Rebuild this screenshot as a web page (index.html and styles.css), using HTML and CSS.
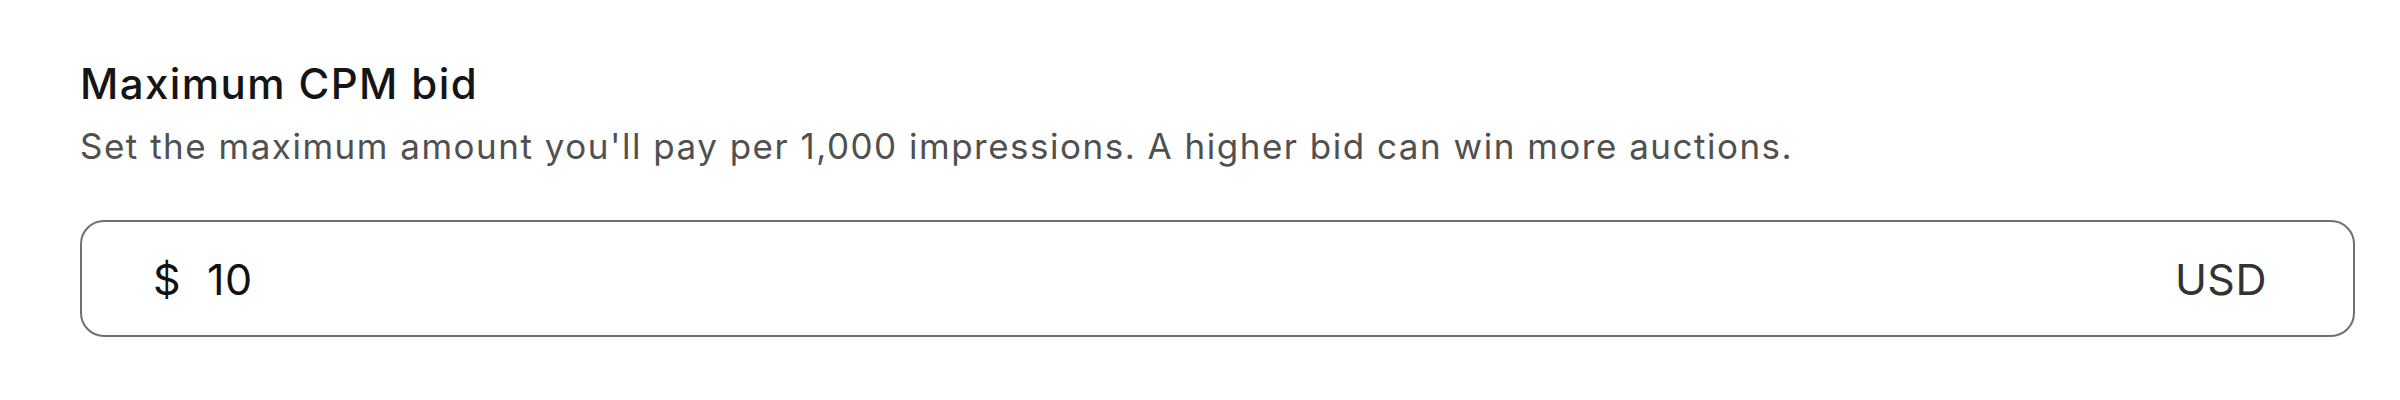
FILE: index.html
```html
<!DOCTYPE html>
<html lang="en">
<head>
<meta charset="utf-8">
<title>Maximum CPM bid</title>
<link rel="stylesheet" href="styles.css">
</head>
<body>
<section class="field">
  <label class="field-label" for="bid">Maximum CPM bid</label>
  <p class="field-help">Set the maximum amount you'll pay per 1,000 impressions. A higher bid can win more auctions.</p>
  <div class="input-box">
    <span class="prefix">$</span>
    <input id="bid" class="input" type="text" value="10">
    <span class="suffix">USD</span>
  </div>
</section>
</body>
</html>
```
FILE: styles.css
```css
html, body {
  margin: 0;
  padding: 0;
  background: #ffffff;
}
body {
  font-family: Inter, "Noto Sans", "Liberation Sans", sans-serif;
  color: #111111;
}
.field {
  display: flex;
  flex-direction: column;
  padding: 59px 45px 0 80px;
}
.field-label {
  font-size: 42px;
  font-weight: 500;
  line-height: 50px;
  letter-spacing: 1.4px;
  color: #151515;
}
.field-help {
  margin: 15px 0 0 0;
  font-size: 35px;
  font-weight: 400;
  line-height: 44px;
  letter-spacing: 1.5px;
  color: #505050;
}
.input-box {
  margin-top: 52px;
  height: 113px;
  border: 2px solid #707070;
  border-radius: 24px;
  display: flex;
  align-items: center;
  padding: 0 86px 0 71px;
  gap: 26px;
}
.prefix, .input, .suffix {
  font-family: Inter, "Noto Sans", "Liberation Sans", sans-serif;
  font-size: 43px;
  letter-spacing: 0.5px;
  color: #111111;
}
.input {
  flex: 1;
  border: 0;
  outline: none;
  padding: 0;
  margin: 0;
  background: transparent;
  min-width: 0;
}
.suffix {
  color: #333333;
}
```
